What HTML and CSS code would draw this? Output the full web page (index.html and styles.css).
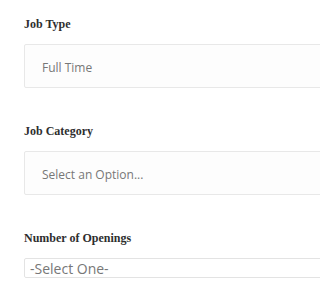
FILE: index.html
```html
<!DOCTYPE html>
<html>
<head>
<meta charset="utf-8">
<link rel="stylesheet" href="styles.css">
</head>
<body>
<form class="form">
  <div class="field">
    <label class="label">Job Type</label>
    <div class="box"><span class="value">Full Time</span></div>
  </div>
  <div class="field">
    <label class="label">Job Category</label>
    <div class="box"><span class="value">Select an Option...</span></div>
  </div>
  <div class="field field-last">
    <label class="label">Number of Openings</label>
    <div class="select"><span class="select-value">-Select One-</span></div>
  </div>
</form>
</body>
</html>
```
FILE: styles.css
```css
html, body {
  margin: 0;
  padding: 0;
  background: #ffffff;
  overflow: hidden;
}
.form {
  padding: 17px 0 0 24px;
  width: 300px;
}
.field {
  margin-bottom: 36px;
}
.field-last {
  margin-bottom: 0;
}
.label {
  display: block;
  font-family: "Liberation Serif", serif;
  font-weight: bold;
  font-size: 12px;
  line-height: 14px;
  color: #2e2e2e;
  margin-bottom: 13px;
}
.box {
  box-sizing: border-box;
  height: 44px;
  border: 1px solid #e8e8e8;
  border-radius: 2px;
  background: #fdfdfd;
  display: flex;
  align-items: center;
  padding-left: 17px;
}
.value {
  font-family: "Open Sans", sans-serif;
  font-size: 12px;
  color: #777777;
  padding-top: 2px;
}
.select {
  box-sizing: border-box;
  height: 20px;
  border: 1px solid #e3e3e3;
  border-radius: 2px;
  background: #ffffff;
  display: flex;
  align-items: center;
  padding-left: 5px;
}
.select-value {
  font-family: "Open Sans", sans-serif;
  font-size: 14px;
  color: #777777;
}
```
